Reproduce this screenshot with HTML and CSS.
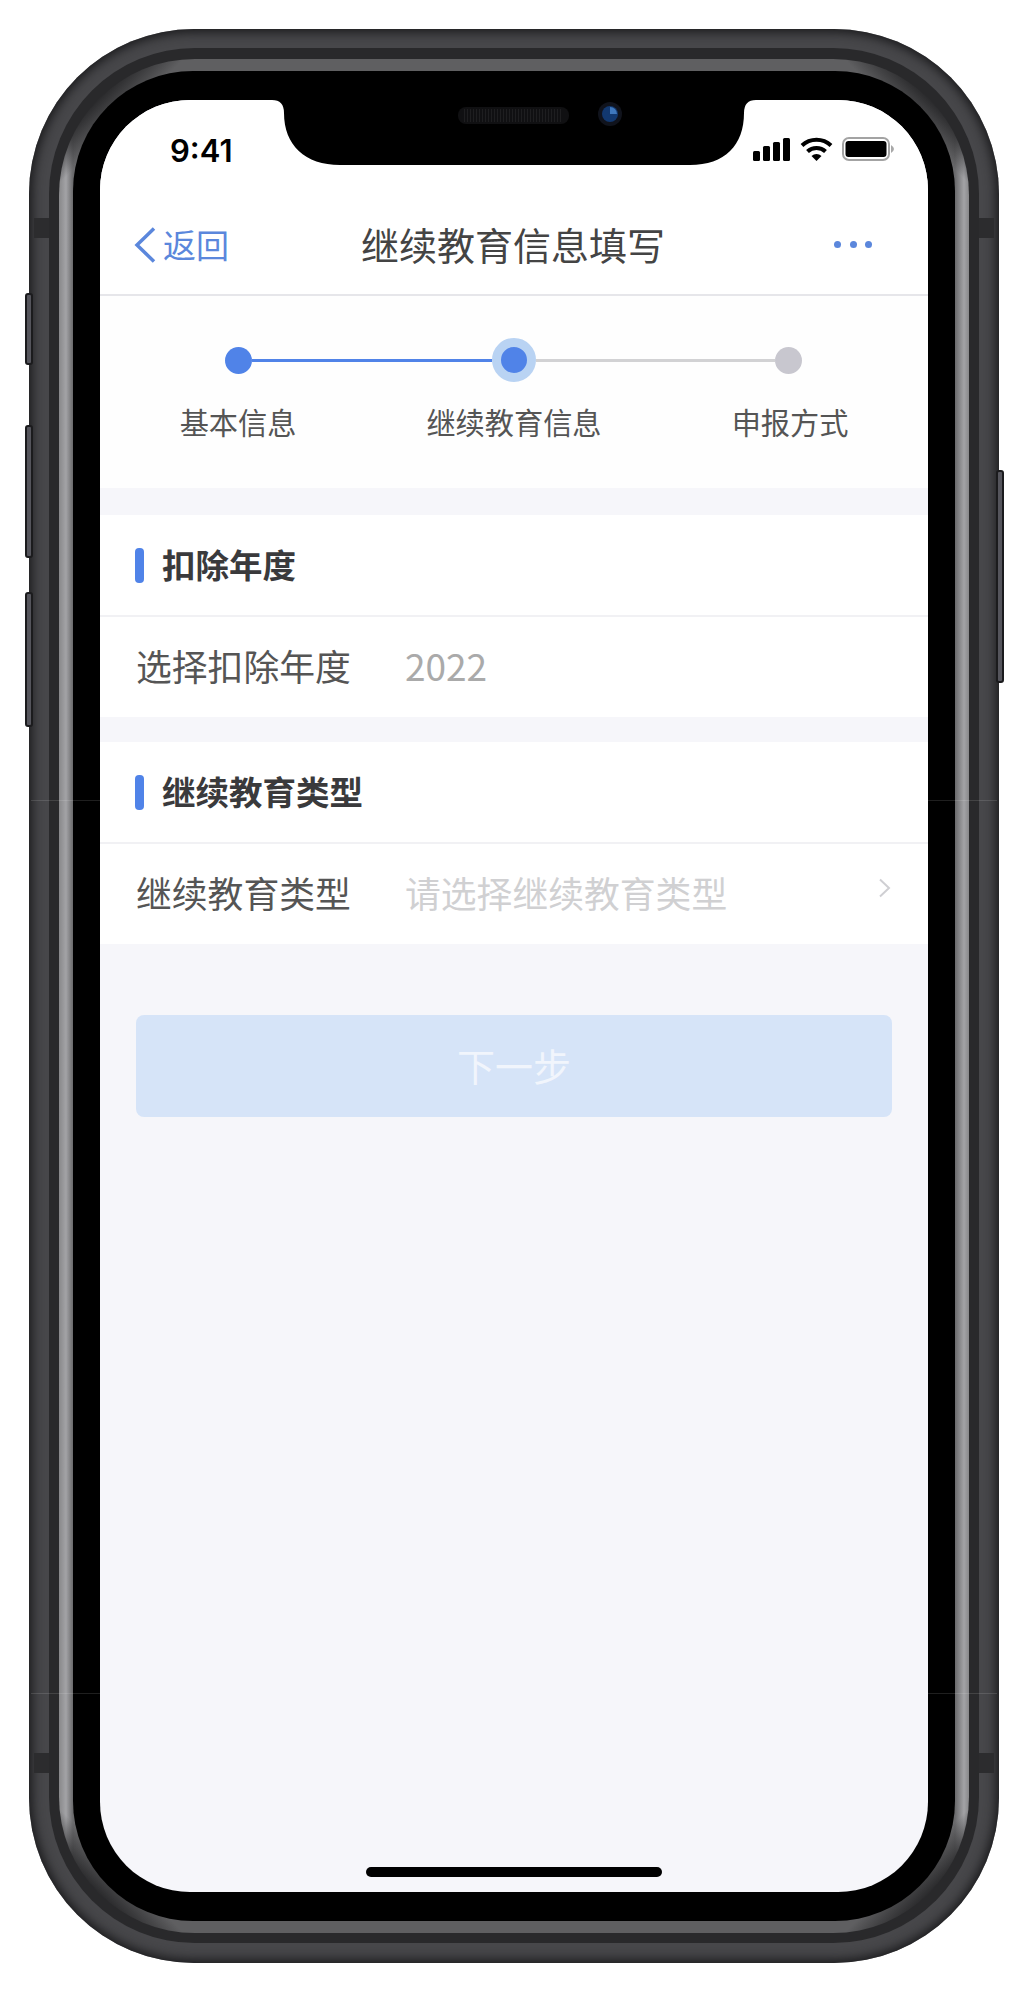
FILE: index.html
```html
<!DOCTYPE html>
<html lang="zh-CN">

<head>
    <meta charset="UTF-8">
    <meta name="viewport" content="width=device-width, initial-scale=1.0">
    <title>继续教育信息填写</title>
    <link rel="stylesheet" href="styles.css">
</head>

<body>
    <div class="phone">
        <span class="side-btn btn-mute"></span>
        <span class="side-btn btn-up"></span>
        <span class="side-btn btn-down"></span>
        <span class="side-btn btn-power"></span>
        <span class="antenna ant-tl"></span>
        <span class="antenna ant-tr"></span>
        <span class="antenna ant-bl"></span>
        <span class="antenna ant-br"></span>
        <span class="seam seam-l seam-1"></span>
        <span class="seam seam-r seam-1"></span>
        <span class="seam seam-l seam-2"></span>
        <span class="seam seam-r seam-2"></span>

        <div class="band">
            <div class="rim">
                <div class="bezel">
                    <div class="screen">
                        <svg class="notch" viewBox="0 0 828 70">
                            <path d="M172 0Q184 0 184 13C184 45 205 65 240 65L590 65C625 65 644 45 644 13Q644 0 656 0Z" fill="#000" />
                            <rect x="358" y="7" width="111" height="17" rx="8" fill="#101012" />
                            <line x1="364" y1="15.500" x2="463" y2="15.500" stroke="#1e1e20" stroke-width="13" stroke-dasharray="1 2" />
                            <circle cx="510" cy="14" r="12" fill="#10131c" />
                            <circle cx="510" cy="14" r="8" fill="#12386f" />
                            <path d="M510 7A7 7 0 0 1 517 14L510 14Z" fill="#3f78bd" />
                        </svg>

                        <div class="status-bar">
                            <span class="time">9:41</span>
                            <div class="status-icons">
                                <svg width="37" height="24" viewBox="0 0 37 24">
                                    <rect x="0" y="14" width="7" height="10" rx="1.5" />
                                    <rect x="10" y="9" width="7" height="15" rx="1.5" />
                                    <rect x="20" y="5" width="7" height="19" rx="1.5" />
                                    <rect x="30" y="1" width="7" height="23" rx="1.5" />
                                </svg>
                                <svg width="33" height="24" viewBox="0 0 33 24">
                                    <path d="M2 8.5A21 21 0 0 1 31 8.5" fill="none" stroke="#000" stroke-width="4" />
                                    <path d="M7.5 14.5A13 13 0 0 1 25.5 14.5" fill="none" stroke="#000" stroke-width="4" />
                                    <path d="M16.5 24L11.5 19A7.5 7.5 0 0 1 21.5 19Z" />
                                </svg>
                                <svg width="52" height="24" viewBox="0 0 52 24">
                                    <rect x="1" y="1" width="46" height="22" rx="6" fill="none" stroke="#a3a3a3" stroke-width="2" />
                                    <rect x="3.500" y="4" width="41" height="16" rx="3" />
                                    <path d="M49 8Q52 10 52 12Q52 14 49 16Z" fill="#a8a8a8" />
                                </svg>
                            </div>
                        </div>

                        <div class="nav-bar">
                            <div class="back">
                                <svg width="22" height="36" viewBox="0 0 22 36">
                                    <path d="M20 1.500L3 18L20 34.500" fill="none" stroke="#5b87dc" stroke-width="3.500" />
                                </svg>
                                <span class="back-text">返回</span>
                            </div>
                            <div class="nav-title">继续教育信息填写</div>
                            <div class="more"><i></i><i></i><i></i></div>
                        </div>

                        <div class="steps">
                            <div class="track">
                                <span class="dot"></span>
                                <span class="line line-done"></span>
                                <span class="dot dot-current"></span>
                                <span class="line"></span>
                                <span class="dot dot-todo"></span>
                            </div>
                            <div class="step-labels">
                                <span>基本信息</span>
                                <span>继续教育信息</span>
                                <span>申报方式</span>
                            </div>
                        </div>

                        <div class="section">
                            <div class="section-head"><span class="mark"></span>扣除年度</div>
                            <div class="row">
                                <span class="row-label">选择扣除年度</span>
                                <span class="row-value">2022</span>
                            </div>
                        </div>

                        <div class="section">
                            <div class="section-head"><span class="mark"></span>继续教育类型</div>
                            <div class="row">
                                <span class="row-label">继续教育类型</span>
                                <span class="row-placeholder">请选择继续教育类型</span>
                                <svg class="chevron" width="13" height="20" viewBox="0 0 13 20">
                                    <path d="M2 1.500L11 10L2 18.500" fill="none" stroke="#cfcfd3" stroke-width="2" />
                                </svg>
                            </div>
                        </div>

                        <button class="next-btn">下一步</button>

                        <div class="home-bar"></div>
                    </div>
                </div>
            </div>
        </div>
    </div>
</body>

</html>
```
FILE: styles.css
```css
* {
    box-sizing: border-box;
}

body {
    margin: 0;
    height: 1992px;
    padding-top: 29px;
    background-color: #fff;
    font-family: "Noto Sans CJK SC", "Liberation Sans", sans-serif;
    overflow: hidden;
}

/* phone frame, one nested box per ring */
.phone {
    position: relative;
    width: 970px;
    height: 1934px;
    margin-left: 29px;
    padding: 19px 20px 20px;
    border-radius: 165px;
    background-color: #47474a;
    box-shadow: inset 0 0 11px 3px #18181a;
}

.band {
    height: 100%;
    padding: 11px 10px 10px;
    border-radius: 146px;
    background-color: #29292b;
}

.rim {
    height: 100%;
    padding: 12px 14px;
    border-radius: 136px;
    background:
        linear-gradient(135deg, #2c2c2e 31%, transparent 48%) 0 0 / 130px 130px no-repeat,
        linear-gradient(225deg, #2c2c2e 31%, transparent 48%) 100% 0 / 130px 130px no-repeat,
        linear-gradient(45deg, #2c2c2e 31%, transparent 48%) 0 100% / 130px 130px no-repeat,
        linear-gradient(315deg, #2c2c2e 31%, transparent 48%) 100% 100% / 130px 130px no-repeat,
        linear-gradient(90deg, #88888a 0, #a3a3a6 7px, #6a6a6c 14px, #5f5f61 50px, #5f5f61 calc(100% - 50px), #6a6a6c calc(100% - 14px), #a3a3a6 calc(100% - 5px), #88888a 100%);
}

.bezel {
    height: 100%;
    padding: 29px 27px;
    border-radius: 120px;
    background-color: #000;
}

.screen {
    position: relative;
    height: 1792px;
    border-radius: 90px;
    background-color: #f6f6fa;
    overflow: hidden;
}

.side-btn {
    position: absolute;
    width: 8px;
    border-radius: 3px;
    background-color: #55555c;
    border: 2px solid #1b1b1d;
}

.btn-mute {
    left: -4px;
    top: 264px;
    height: 72px;
}

.btn-up {
    left: -4px;
    top: 396px;
    height: 133px;
}

.btn-down {
    left: -4px;
    top: 563px;
    height: 135px;
}

.btn-power {
    right: -5px;
    top: 441px;
    height: 213px;
}

.antenna {
    position: absolute;
    width: 15px;
    height: 20px;
    background-color: #2c2c2e;
}

.ant-tl {
    left: 5px;
    top: 189px;
}

.ant-tr {
    right: 5px;
    top: 189px;
}

.ant-bl {
    left: 5px;
    top: 1724px;
}

.ant-br {
    right: 5px;
    top: 1724px;
}

.seam {
    position: absolute;
    width: 69px;
    height: 1px;
    background-color: rgba(255, 255, 255, 0.12);
    z-index: 2;
}

.seam-l {
    left: 2px;
}

.seam-r {
    right: 2px;
}

.seam-1 {
    top: 771px;
}

.seam-2 {
    top: 1664px;
}

.notch {
    position: absolute;
    left: 0;
    top: 0;
    width: 828px;
    height: 70px;
}

/* status bar */
.status-bar {
    display: flex;
    justify-content: space-between;
    align-items: flex-start;
    height: 95px;
    padding: 37px 34px 0 70px;
    background-color: #fff;
}

.time {
    margin-top: -4px;
    font-family: Inter, sans-serif;
    font-size: 31px;
    font-weight: 600;
    line-height: 36px;
    color: #000;
}

.status-icons {
    display: flex;
    gap: 9.500px;
}

/* nav bar */
.nav-bar {
    display: grid;
    grid-template-columns: 1fr auto 1fr;
    align-items: center;
    height: 101px;
    background-color: #fff;
    border-bottom: 2px solid #e6e6ea;
}

.back {
    display: flex;
    align-items: center;
    gap: 7px;
    padding-left: 34px;
    font-size: 33px;
    color: #5b87dc;
}

.back-text {
    padding-bottom: 2px;
}

.nav-title {
    padding: 0 2px 2px 0;
    font-size: 38px;
    color: #444;
}

.more {
    display: flex;
    justify-content: flex-end;
    gap: 8.500px;
    padding-right: 56px;
}

.more i {
    width: 7px;
    height: 7px;
    border-radius: 50%;
    background-color: #5b87dc;
}

/* steps */
.steps {
    height: 192px;
    padding-top: 42px;
    background-color: #fefefe;
}

.track {
    display: flex;
    align-items: center;
    height: 44px;
    padding: 0 126px 0 125px;
}

.dot {
    flex: none;
    width: 27px;
    height: 27px;
    border-radius: 50%;
    background-color: #5083e8;
}

.dot-current {
    width: 44px;
    height: 44px;
    border: 9px solid #b9d3f3;
}

.dot-todo {
    background-color: #c8c7cf;
}

.line {
    flex: 1;
    height: 3px;
    background-color: #d2d2d4;
}

.line-done {
    background-color: #5083e8;
}

.step-labels {
    display: grid;
    grid-template-columns: repeat(3, 1fr);
    margin-top: 19px;
    font-size: 29.200px;
    line-height: 40px;
    text-align: center;
    color: #555;
}

/* form sections */
.section {
    margin-top: 27px;
    background-color: #fff;
}

.section + .section {
    margin-top: 25px;
}

.section-head {
    display: flex;
    align-items: center;
    gap: 18px;
    height: 102px;
    padding: 0 0 4px 35px;
    border-bottom: 2px solid #f1f1f4;
    font-size: 33.500px;
    font-weight: 700;
    color: #3a3a3c;
}

.mark {
    width: 9px;
    height: 35px;
    margin-top: 4px;
    border-radius: 4px;
    background-color: #5083e8;
}

.row {
    display: flex;
    align-items: center;
    height: 100px;
    padding: 0 37px 5px 36px;
    font-size: 35.800px;
}

.row-label {
    width: 269px;
    color: #555;
}

.row-value {
    color: #aaa;
    font-size: 37px;
}

.row-placeholder {
    flex: 1;
    color: #d0d0d2;
}

.chevron {
    flex: none;
    margin-top: -7px;
}

.next-btn {
    display: block;
    width: 756px;
    height: 102px;
    margin: 71px 0 0 36px;
    padding: 0 0 4px;
    border: none;
    border-radius: 8px;
    background-color: #d6e4f8;
    color: #f1f5fc;
    font-family: inherit;
    font-size: 38px;
}

.home-bar {
    position: absolute;
    left: 266px;
    bottom: 15px;
    width: 296px;
    height: 10px;
    border-radius: 5px;
    background-color: #000;
}
```
